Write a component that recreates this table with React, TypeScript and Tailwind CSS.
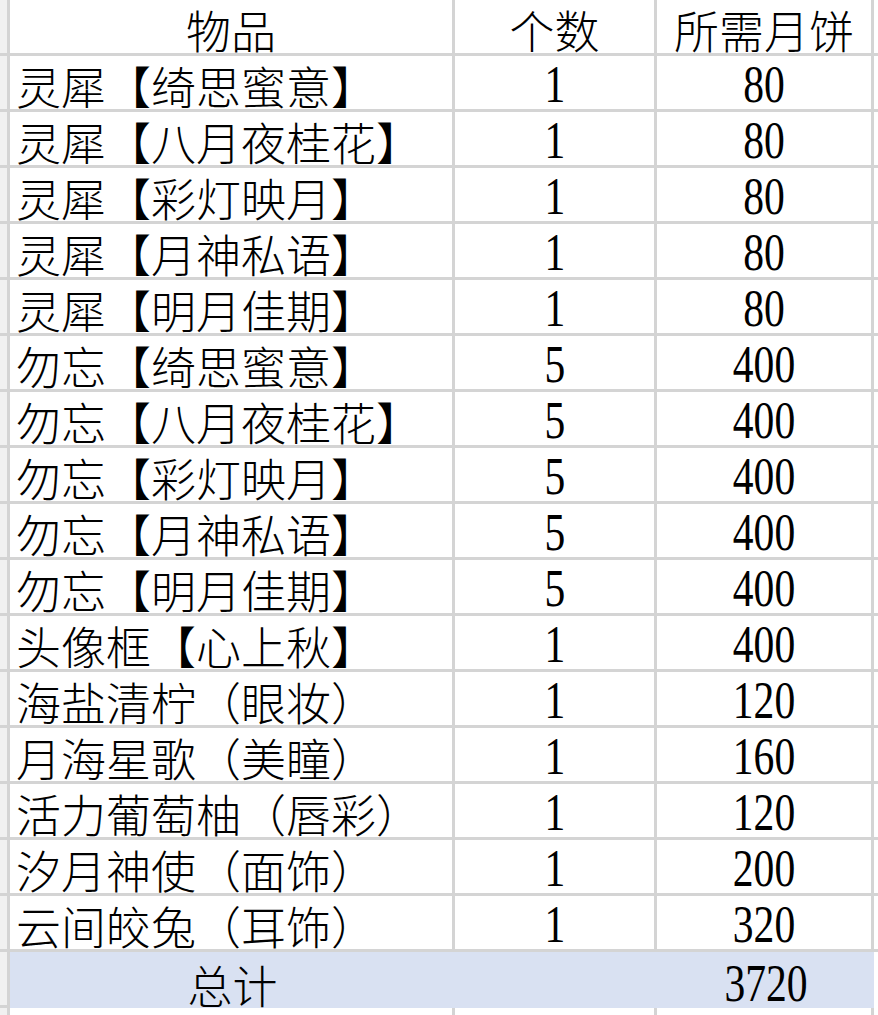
import React from "react";

// 表格数据：物品 / 个数 / 所需月饼
const rows: [string, number, number][] = [
  ["灵犀【绮思蜜意】", 1, 80],
  ["灵犀【八月夜桂花】", 1, 80],
  ["灵犀【彩灯映月】", 1, 80],
  ["灵犀【月神私语】", 1, 80],
  ["灵犀【明月佳期】", 1, 80],
  ["勿忘【绮思蜜意】", 5, 400],
  ["勿忘【八月夜桂花】", 5, 400],
  ["勿忘【彩灯映月】", 5, 400],
  ["勿忘【月神私语】", 5, 400],
  ["勿忘【明月佳期】", 5, 400],
  ["头像框【心上秋】", 1, 400],
  ["海盐清柠（眼妆）", 1, 120],
  ["月海星歌（美瞳）", 1, 160],
  ["活力葡萄柚（唇彩）", 1, 120],
  ["汐月神使（面饰）", 1, 200],
  ["云间皎兔（耳饰）", 1, 320],
];

const cjk = "font-['Noto_Sans_CJK_SC',sans-serif] font-light text-[45px] leading-none";
const num = "font-['Liberation_Serif',serif] text-[52px] leading-[40px] inline-block scale-x-[0.8]";

const Num: React.FC<{ v: number | string }> = ({ v }) => <span className={num}>{v}</span>;

export default function App() {
  return (
    <div className="w-[878px] h-[1015px] overflow-hidden bg-white text-black">
      {/* 表头 */}
      <div className="flex h-[56px] border-b-[3px] border-[#d4d4d4]">
        <div className="w-[10px] bg-[#f1f1f1] border-r-[3px] border-[#d4d4d4]" />
        <div className={`w-[445px] border-r-[3px] border-[#d4d4d4] flex items-end justify-center pb-[1px] ${cjk}`}>
          物品
        </div>
        <div className={`w-[202px] border-r-[3px] border-[#d4d4d4] flex items-end justify-center pb-[1px] ${cjk}`}>
          个数
        </div>
        <div className={`w-[217px] border-r-[3px] border-[#d4d4d4] flex items-end justify-center pb-[1px] ${cjk}`}>
          所需月饼
        </div>
        <div className="flex-1" />
      </div>

      {rows.map(([name, count, cost], i) => (
        <div key={i} className="flex h-[56px] border-b-[3px] border-[#d4d4d4]">
          <div className="w-[10px] bg-[#f1f1f1] border-r-[3px] border-[#d4d4d4]" />
          <div className={`w-[445px] border-r-[3px] border-[#d4d4d4] flex items-end pl-[6px] pb-[1px] whitespace-nowrap ${cjk}`}>
            {name}
          </div>
          <div className="w-[202px] border-r-[3px] border-[#d4d4d4] flex items-end justify-center pb-[4px]">
            <Num v={count} />
          </div>
          <div className="w-[217px] border-r-[3px] border-[#d4d4d4] flex items-end justify-center pb-[4px]">
            <Num v={cost} />
          </div>
          <div className="flex-1" />
        </div>
      ))}

      {/* 总计 */}
      <div className="flex h-[56px]">
        <div className="w-[10px] bg-[#f1f1f1] border-r-[3px] border-b-[3px] border-[#d4d4d4]" />
        <div className="w-[864px] bg-[#d9e1f2] flex">
          <div className={`w-[445px] flex items-end justify-center pb-[1px] ${cjk}`}>总计</div>
          <div className="w-[202px]" />
          <div className="w-[217px] flex items-end justify-center pb-[4px]">
            <Num v={3720} />
          </div>
        </div>
        <div className="flex-1" />
      </div>

      <div className="flex h-[10px]">
        <div className="w-[10px] bg-[#f1f1f1] border-r-[3px] border-[#d4d4d4]" />
        <div className="w-[445px] border-r-[3px] border-[#d4d4d4]" />
        <div className="w-[202px] border-r-[3px] border-[#d4d4d4]" />
        <div className="w-[217px] border-r-[3px] border-[#d4d4d4]" />
      </div>
    </div>
  );
}
